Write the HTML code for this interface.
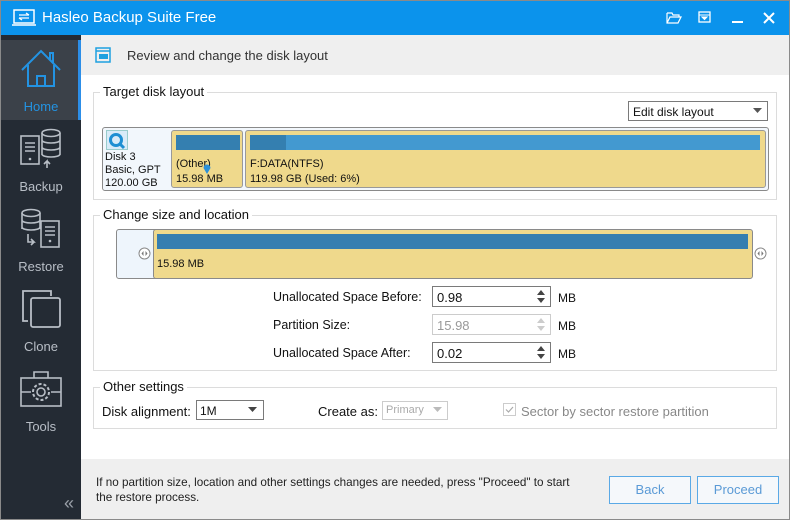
<!DOCTYPE html>
<html><head><style>
*{box-sizing:border-box;margin:0;padding:0}
body{width:790px;height:520px;position:relative;overflow:hidden;font-family:"Liberation Sans",sans-serif;font-size:12px;color:#111;background:#fff}
.a{position:absolute}
.fs{position:absolute;border:1px solid #dcdcdc}
.lg{position:absolute;background:#fff;padding:0 3px;font-size:13px;top:-9px;left:6px}
.nav{position:absolute;left:1px;width:80px;text-align:center;color:#b8bec6;font-size:13px}
.inp{position:absolute;left:432px;width:119px;height:21px;border:1px solid #7a7a7a;background:#fff;padding:3px 4px;font-size:13px}
.lbl{position:absolute;left:273px;font-size:12.5px}
.mb{position:absolute;left:558px;font-size:12px}
.btn{position:absolute;top:476px;width:82px;height:28px;border:1px solid #5aa9e6;background:#f5f8fb;color:#5a9ad6;font-size:13px;text-align:center;line-height:26px}
</style></head><body>
<div class="a" style="left:0;top:0;width:790px;height:520px;border:1px solid #8a8a8a"></div>
<div class="a" style="left:1px;top:1px;width:788px;height:34px;background:#0b93ec"></div>
<svg class="a" style="left:12px;top:9px" width="24" height="18" viewBox="0 0 24 18"><rect x="2" y="1" width="20" height="13" fill="none" stroke="#fff" stroke-width="1.5"/><path d="M0 16H24" stroke="#fff" stroke-width="1.5"/><path d="M7 6h10M14 4l3 2M17 9H7M10 11l-3-2" stroke="#fff" stroke-width="1.3" fill="none"/></svg>
<div class="a" style="left:42px;top:9px;color:#fff;font-size:15px">Hasleo Backup Suite Free</div>
<svg class="a" style="left:666px;top:11px" width="16" height="13"><path d="M1 2h5l1 2h6v2M1 2v10h11l3-6H4L1 12" fill="none" stroke="#fff" stroke-width="1.2"/></svg>
<svg class="a" style="left:698px;top:11px" width="14" height="13"><rect x="1" y="1" width="11" height="10" fill="none" stroke="#fff" stroke-width="1.3"/><path d="M1 4h11M4 6l2.5 2.5L9 6z" stroke="#fff" fill="#fff"/></svg>
<div class="a" style="left:732px;top:21px;width:11px;height:2px;background:#fff"></div>
<svg class="a" style="left:763px;top:12px" width="12" height="12"><path d="M1 1l10 10M11 1L1 11" stroke="#fff" stroke-width="2"/></svg>
<div class="a" style="left:1px;top:35px;width:80px;height:484px;background:#242b34"></div>
<div class="a" style="left:1px;top:40px;width:77px;height:80px;background:#3b4149"></div>
<div class="a" style="left:78px;top:40px;width:3px;height:80px;background:#2c8ee8"></div>
<svg class="a" style="left:20px;top:48px" width="42" height="42" viewBox="0 0 42 42"><path d="M2 22L21 3l19 19M8 17v21h26V17M17 38V28h8v10M30 12V5h3v10" fill="none" stroke="#2393e2" stroke-width="2"/></svg>
<div class="nav" style="top:99px;color:#2393e2">Home</div>
<svg class="a" style="left:20px;top:128px" width="42" height="42" viewBox="0 0 42 42"><rect x="1" y="8" width="18" height="28" fill="none" stroke="#b8bec6" stroke-width="1.6"/><path d="M5 15h10M5 19h10M5 23h10" stroke="#b8bec6" stroke-width="1.5"/><circle cx="10" cy="31" r="1.3" fill="#b8bec6"/><ellipse cx="31" cy="5" rx="9" ry="3.5" fill="#242b34" stroke="#b8bec6" stroke-width="1.6"/><path d="M22 5v22M40 5v22M22 12c0 4 18 4 18 0M22 19c0 4 18 4 18 0M22 26c0 4 18 4 18 0M27 40v-7l-3 3M27 33l3 3" fill="none" stroke="#b8bec6" stroke-width="1.6"/></svg>
<div class="nav" style="top:179px">Backup</div>
<svg class="a" style="left:20px;top:208px" width="42" height="42" viewBox="0 0 42 42"><ellipse cx="11" cy="5" rx="9" ry="3.5" fill="none" stroke="#b8bec6" stroke-width="1.6"/><path d="M2 5v16M20 5v16M2 12c0 4 18 4 18 0M2 19c0 4 18 4 18 0M8 26v8h6l-3-3M14 34l-3 3" fill="none" stroke="#b8bec6" stroke-width="1.6"/><rect x="21" y="13" width="18" height="26" fill="none" stroke="#b8bec6" stroke-width="1.6"/><path d="M25 19h10M25 23h10M25 27h10" stroke="#b8bec6" stroke-width="1.5"/><circle cx="30" cy="33" r="1.3" fill="#b8bec6"/></svg>
<div class="nav" style="top:259px">Restore</div>
<svg class="a" style="left:20px;top:288px" width="42" height="42" viewBox="0 0 42 42"><path d="M8 33H3V3h28v5" fill="none" stroke="#b8bec6" stroke-width="1.8"/><rect x="11" y="10" width="29" height="29" rx="2" fill="none" stroke="#b8bec6" stroke-width="1.8"/></svg>
<div class="nav" style="top:339px">Clone</div>
<svg class="a" style="left:19px;top:368px" width="44" height="42" viewBox="0 0 44 42"><rect x="2" y="10" width="40" height="28" fill="none" stroke="#b8bec6" stroke-width="1.6"/><path d="M15 10V4h14v6M2 24h10M32 24h10" fill="none" stroke="#b8bec6" stroke-width="1.6"/><circle cx="22" cy="24" r="8" fill="none" stroke="#b8bec6" stroke-width="2" stroke-dasharray="3 2"/><circle cx="22" cy="24" r="4" fill="none" stroke="#b8bec6" stroke-width="1.6"/></svg>
<div class="nav" style="top:419px">Tools</div>
<div class="a" style="left:64px;top:493px;color:#9aa0a8;font-size:18px">«</div>
<div class="a" style="left:81px;top:35px;width:708px;height:40px;background:#efefef"></div>
<svg class="a" style="left:95px;top:47px" width="16" height="16"><rect x="1" y="1" width="14" height="14" fill="none" stroke="#1ea1e0" stroke-width="1.5"/><path d="M1 4h14" stroke="#1ea1e0" stroke-width="1.5"/><rect x="4" y="7" width="9" height="5" fill="#1ea1e0"/></svg>
<div class="a" style="left:127px;top:48px;font-size:13px;color:#333">Review and change the disk layout</div>
<div class="fs" style="left:93px;top:92px;width:684px;height:108px"><div class="lg">Target disk layout</div></div>
<div class="a" style="left:628px;top:101px;width:140px;height:20px;border:1px solid #7a7a7a;background:#fff;padding:3px 4px;font-size:12px">Edit disk layout</div>
<svg class="a" style="left:753px;top:108px" width="9" height="6"><path d="M0 0h9L4.5 5z" fill="#555"/></svg>
<div class="a" style="left:102px;top:127px;width:667px;height:64px;border:1px solid #8a8a8a;border-radius:3px;background:#f2f7fc"></div>
<svg class="a" style="left:106px;top:130px" width="22" height="20"><rect x="0.5" y="0.5" width="21" height="19" fill="#d8ebf8" stroke="#9cc"/><circle cx="10" cy="10" r="5.5" fill="none" stroke="#1d8fd3" stroke-width="3"/><path d="M13 13l5 5" stroke="#1d8fd3" stroke-width="3"/></svg>
<div class="a" style="left:105px;top:151px;font-size:11px;line-height:13px">Disk 3<br>Basic, GPT<br>120.00 GB</div>
<div class="a" style="left:171px;top:130px;width:72px;height:58px;background:#efd98c;border:1px solid #999;border-radius:3px"></div>
<div class="a" style="left:176px;top:135px;width:64px;height:15px;background:#347fb0"></div>
<div class="a" style="left:176px;top:157px;font-size:11px;line-height:15px">(Other)<br>15.98 MB</div>
<svg class="a" style="left:203px;top:164px" width="8" height="10"><path d="M4 10L0.5 4a3.5 3.5 0 117 0z" fill="#2b90d9"/></svg>
<div class="a" style="left:245px;top:130px;width:521px;height:58px;background:#efd98c;border:1px solid #999;border-radius:3px"></div>
<div class="a" style="left:250px;top:135px;width:510px;height:15px;background:#4399d0"></div>
<div class="a" style="left:250px;top:135px;width:36px;height:15px;background:#347fb0"></div>
<div class="a" style="left:250px;top:157px;font-size:11px;line-height:15px">F:DATA(NTFS)<br>119.98 GB (Used: 6%)</div>
<div class="fs" style="left:93px;top:215px;width:684px;height:156px"><div class="lg">Change size and location</div></div>
<div class="a" style="left:116px;top:229px;width:40px;height:50px;background:#eef5fc;border:1px solid #8a8a8a;border-radius:3px 0 0 3px"></div>
<div class="a" style="left:153px;top:229px;width:600px;height:50px;background:#efd98c;border:1px solid #8a8a8a;border-radius:3px"></div>
<div class="a" style="left:157px;top:234px;width:591px;height:15px;background:#357eb0"></div>
<div class="a" style="left:157px;top:258px;font-size:11px">15.98 MB</div>
<svg class="a" style="left:138px;top:247px" width="13" height="13"><circle cx="6.5" cy="6.5" r="5.5" fill="#fff" stroke="#888"/><path d="M5.5 4v5L3.5 6.5zM7.5 4v5l2-2.5z" fill="#777"/></svg>
<svg class="a" style="left:754px;top:247px" width="13" height="13"><circle cx="6.5" cy="6.5" r="5.5" fill="#fff" stroke="#888"/><path d="M5.5 4v5L3.5 6.5zM7.5 4v5l2-2.5z" fill="#777"/></svg>
<div class="lbl" style="top:290px">Unallocated Space Before:</div>
<div class="lbl" style="top:318px">Partition Size:</div>
<div class="lbl" style="top:346px">Unallocated Space After:</div>
<div class="inp" style="top:286px">0.98</div>
<div class="inp" style="top:314px;border-color:#ccc;color:#999">15.98</div>
<div class="inp" style="top:342px">0.02</div>
<svg class="a" style="left:536px;top:289px" width="10" height="15"><path d="M1 6L5 1l4 5zM1 9l4 5 4-5z" fill="#444"/></svg>
<svg class="a" style="left:536px;top:317px" width="10" height="15"><path d="M1 6L5 1l4 5zM1 9l4 5 4-5z" fill="#ccc"/></svg>
<svg class="a" style="left:536px;top:345px" width="10" height="15"><path d="M1 6L5 1l4 5zM1 9l4 5 4-5z" fill="#444"/></svg>
<div class="mb" style="top:291px">MB</div><div class="mb" style="top:319px">MB</div><div class="mb" style="top:347px">MB</div>
<div class="fs" style="left:93px;top:387px;width:684px;height:42px"><div class="lg">Other settings</div></div>
<div class="a" style="left:102px;top:404px;font-size:13px">Disk alignment:</div>
<div class="a" style="left:196px;top:400px;width:68px;height:20px;border:1px solid #7a7a7a;background:#fff;padding:3px 3px;font-size:12px">1M</div>
<svg class="a" style="left:248px;top:407px" width="9" height="6"><path d="M0 0h9L4.5 5z" fill="#444"/></svg>
<div class="a" style="left:318px;top:404px;font-size:13px">Create as:</div>
<div class="a" style="left:382px;top:401px;width:66px;height:19px;border:1px solid #ccc;color:#aaa;padding:2px 3px;font-size:11px">Primary</div>
<svg class="a" style="left:433px;top:407px" width="9" height="6"><path d="M0 0h9L4.5 5z" fill="#bbb"/></svg>
<svg class="a" style="left:503px;top:403px" width="13" height="13"><rect x="0.5" y="0.5" width="12" height="12" fill="#fff" stroke="#ccc"/><path d="M3 6.5l2.5 2.5L10 4" fill="none" stroke="#aaa" stroke-width="1.2"/></svg>
<div class="a" style="left:521px;top:404px;font-size:13px;color:#888">Sector by sector restore partition</div>
<div class="a" style="left:81px;top:459px;width:708px;height:60px;background:#efefef"></div>
<div class="a" style="left:96px;top:475px;font-size:11.7px;line-height:15px;color:#222">If no partition size, location and other settings changes are needed, press "Proceed" to start<br>the restore process.</div>
<div class="btn" style="left:609px">Back</div>
<div class="btn" style="left:697px">Proceed</div>
</body></html>
